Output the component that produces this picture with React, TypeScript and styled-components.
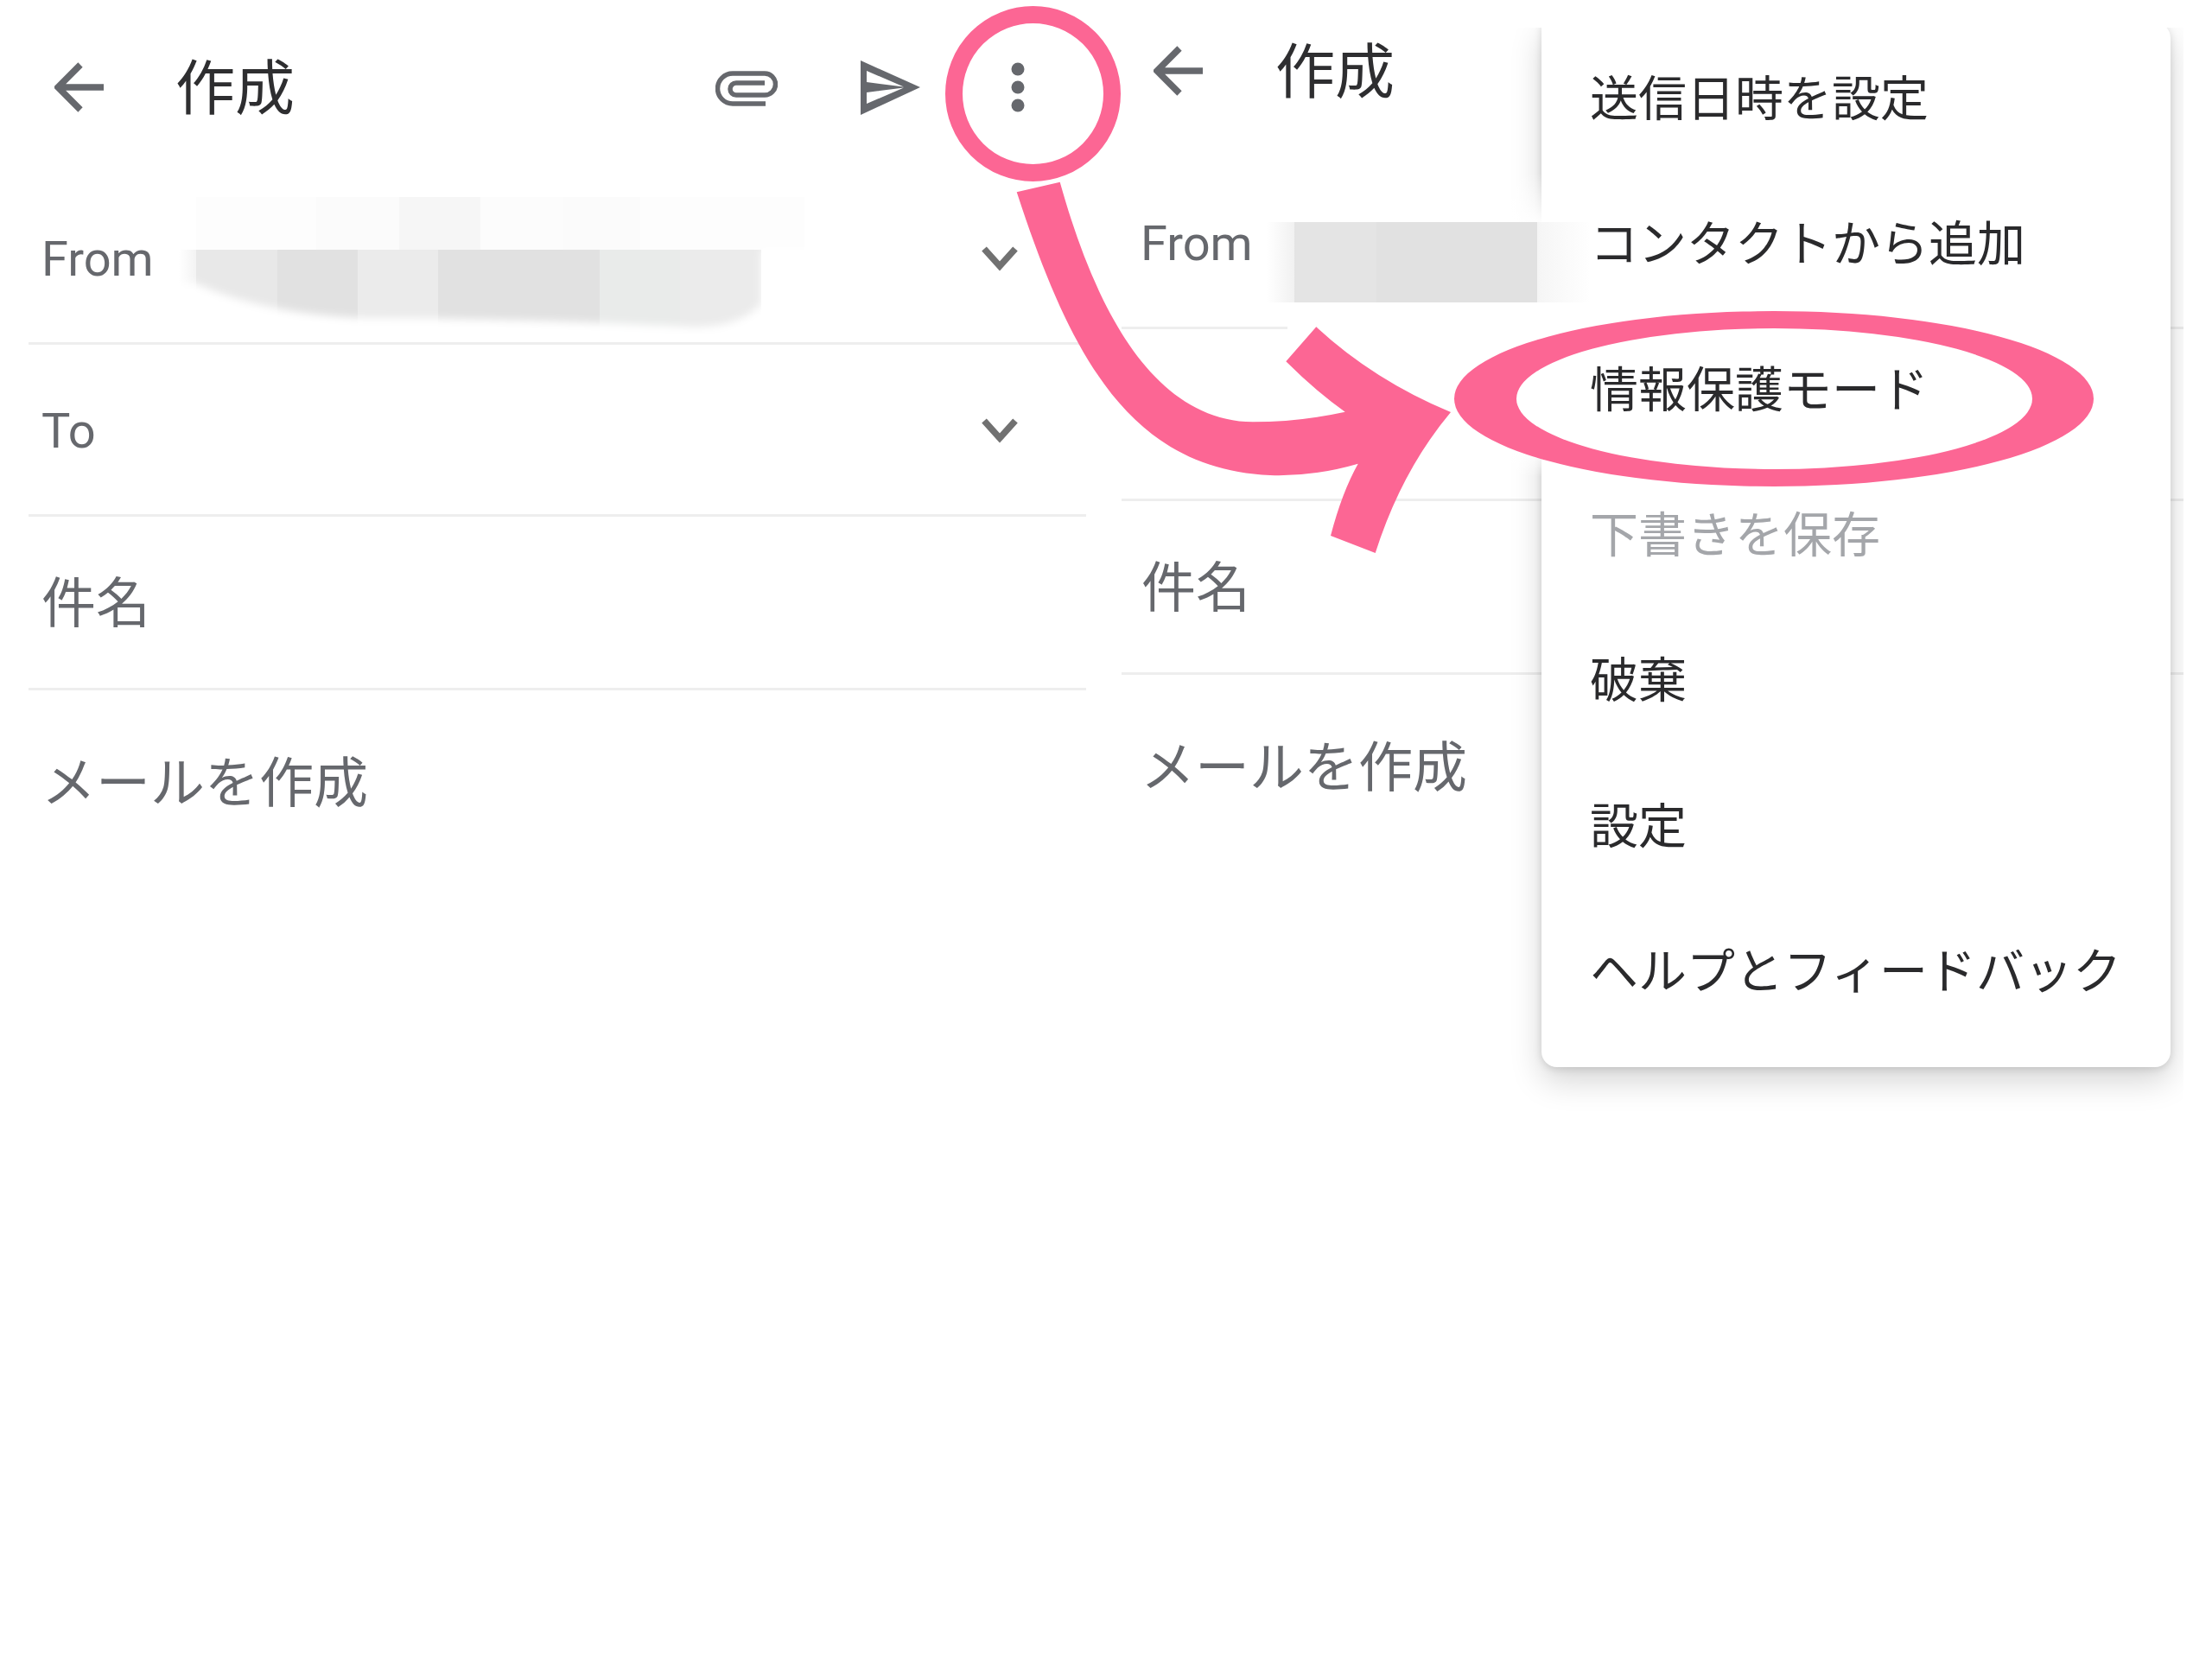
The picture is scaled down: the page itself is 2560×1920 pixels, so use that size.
import React from "react";
import styled, { createGlobalStyle } from "styled-components";

const Global = createGlobalStyle`
  html, body { margin: 0; padding: 0; background: #fff; }
  body { font-family: "Noto Sans CJK JP", "Roboto", sans-serif; }
`;

const Page = styled.div`
  position: relative;
  display: flex;
  align-items: flex-start;
  width: 2560px;
  height: 1920px;
  overflow: hidden;
  background: #fff;
`;

const Panel = styled.section<{ $width: number; $top: number; $pl: number; $pr: number }>`
  position: relative;
  flex: none;
  box-sizing: border-box;
  width: ${(p) => p.$width}px;
  height: ${(p) => 1920 - p.$top}px;
  margin-top: ${(p) => p.$top}px;
  padding: 0 ${(p) => p.$pr}px 0 ${(p) => p.$pl}px;
  overflow: hidden;
`;

const Header = styled.header<{ $h: number; $pt: number; $pb: number; $pl: number }>`
  display: flex;
  align-items: center;
  box-sizing: border-box;
  height: ${(p) => p.$h}px;
  padding: ${(p) => p.$pt}px 0 ${(p) => p.$pb}px ${(p) => p.$pl}px;
`;

const BackIcon = styled.svg<{ $gap: number }>`
  flex: none;
  width: 58px;
  height: 58px;
  margin-right: ${(p) => p.$gap}px;
`;

const Title = styled.h1`
  margin: 0 0 8px;
  font: 400 69px/1 "Noto Sans CJK JP", sans-serif;
  color: #2e2e30;
`;

const Tools = styled.div`
  display: flex;
  align-items: center;
  margin-left: auto;
`;

const ToolIcon = styled.svg<{ $w: number; $mr: number }>`
  flex: none;
  display: block;
  width: ${(p) => p.$w}px;
  height: 70px;
  margin-right: ${(p) => p.$mr}px;
`;

const Row = styled.div<{ $h: number; $pl: number }>`
  display: flex;
  align-items: center;
  box-sizing: border-box;
  height: ${(p) => p.$h}px;
  padding-left: ${(p) => p.$pl}px;
  border-bottom: 3px solid #eeeeee;
`;

const FieldLabel = styled.span`
  margin-top: 3px;
  font: 400 56px/1 "Roboto", sans-serif;
  color: #66686d;
`;

const Placeholder = styled.span`
  margin-bottom: 9px;
  font: 400 63px/1 "Noto Sans CJK JP", sans-serif;
  color: #66686d;
`;

const ComposeRow = styled.div<{ $h: number; $pl: number }>`
  display: flex;
  align-items: center;
  height: ${(p) => p.$h}px;
  padding: 0 0 7px ${(p) => p.$pl}px;
`;

const Mosaic = styled.svg<{ $w: number; $h: number; $ml: number }>`
  position: relative;
  z-index: 3;
  flex: none;
  display: block;
  width: ${(p) => p.$w}px;
  height: ${(p) => p.$h}px;
  margin-left: ${(p) => p.$ml}px;
`;

const Chevron = styled.svg`
  flex: none;
  width: 46px;
  height: 32px;
  margin: 2px 77px 0 auto;
`;

const Menu = styled.ul`
  position: absolute;
  z-index: 1;
  top: -6px;
  right: 15px;
  box-sizing: border-box;
  width: 728px;
  margin: 0;
  padding: 0 0 31px;
  list-style: none;
  background: #fff;
  border-radius: 0 18px 18px 18px;
  box-shadow: 0 16px 36px rgba(0, 0, 0, 0.17), 0 2px 10px rgba(0, 0, 0, 0.13);
`;

const MenuItem = styled.li<{ $disabled?: boolean }>`
  display: flex;
  align-items: center;
  height: 168.33px;
  padding-left: 56px;
  font: 400 56px/1 "Noto Sans CJK JP", sans-serif;
  white-space: nowrap;
  color: ${(p) => (p.$disabled ? "#a4a6aa" : "#2a2a2c")};
`;

const ShadowPatch = styled.div`
  position: absolute;
  z-index: 2;
  left: 192px;
  top: 168px;
  width: 294px;
  height: 352px;
  background: linear-gradient(
    to bottom,
    rgba(255, 255, 255, 0),
    #fff 60px,
    #fff 320px,
    rgba(255, 255, 255, 0)
  );
`;

const Annotations = styled.svg`
  position: absolute;
  z-index: 5;
  left: 0;
  top: 0;
  width: 2560px;
  height: 1920px;
  pointer-events: none;
`;

const Back = ({ gap }: { gap: number }) => (
  <BackIcon $gap={gap} viewBox="0 0 58 58" fill="none" stroke="#66686d" strokeWidth="7.5">
    <path d="M57 29H4M30 3 4 29l26 26" />
  </BackIcon>
);

const Down = () => (
  <Chevron viewBox="0 0 46 32" fill="none" stroke="#717171" strokeWidth="7.5">
    <path d="M5 5 23 25 41 5" />
  </Chevron>
);

const lowerCells = [
  [226, "#e8e8e8"],
  [320, "#e1e1e1"],
  [413, "#ebebeb"],
  [506, "#e1e1e1"],
  [600, "#e1e1e1"],
  [693, "#e9ebea"],
  [786, "#ebebeb"],
] as const;

const upperCells = [
  [226, 139, "#fdfdfd"],
  [365, 96, "#fbfbfb"],
  [461, 94, "#f6f6f6"],
  [555, 95, "#fcfcfc"],
  [650, 90, "#fbfbfb"],
  [740, 190, "#fdfdfd"],
] as const;

const LeftMosaic = () => (
  <Mosaic $w={740} $h={180} $ml={23} viewBox="200 208 740 180">
    <defs>
      <filter id="soft" x="-10%" y="-20%" width="120%" height="140%">
        <feGaussianBlur stdDeviation="5" />
      </filter>
      <mask id="smudge" maskUnits="userSpaceOnUse" x="200" y="208" width="740" height="180">
        <path
          fill="#fff"
          filter="url(#soft)"
          d="M190 200H960V289H880V352Q850 382 790 378Q600 368 415 368Q300 362 226 328H190Z"
        />
      </mask>
      <linearGradient id="fadeIn" x1="0" x2="1" y1="0" y2="0">
        <stop offset="0" stopColor="#fff" />
        <stop offset="1" stopColor="#f3f3f3" />
      </linearGradient>
    </defs>
    <g mask="url(#smudge)">
      {upperCells.map(([x, w, c]) => (
        <rect key={x} x={x} y={228} width={w} height={61} fill={c} />
      ))}
      {lowerCells.map(([x, c]) => (
        <rect key={x} x={x} y={289} width={94} height={100} fill={c} />
      ))}
      <rect x={206} y={289} width={20} height={60} fill="url(#fadeIn)" />
    </g>
  </Mosaic>
);

const RightMosaic = () => (
  <Mosaic $w={375} $h={190} $ml={16} viewBox="1465 185 375 190">
    <defs>
      <linearGradient id="fadeRight" x1="0" x2="1" y1="0" y2="0">
        <stop offset="0" stopColor="#fff" />
        <stop offset="1" stopColor="#f1f1f1" />
      </linearGradient>
      <linearGradient id="fadeOut" x1="0" x2="1" y1="0" y2="0">
        <stop offset="0" stopColor="#f5f5f5" />
        <stop offset="1" stopColor="#fff" />
      </linearGradient>
    </defs>
    <rect x={1465} y={257} width={32} height={93} fill="url(#fadeRight)" />
    <rect x={1497} y={257} width={95} height={93} fill="#e4e4e4" />
    <rect x={1592} y={257} width={186} height={93} fill="#e1e1e1" />
    <rect x={1778} y={257} width={62} height={93} fill="url(#fadeOut)" />
  </Mosaic>
);

const menuItems = [
  "送信日時を設定",
  "コンタクトから追加",
  "情報保護モード",
  "下書きを保存",
  "破棄",
  "設定",
  "ヘルプとフィードバック",
];

export default function App() {
  return (
    <Page>
      <Global />
      <Panel $width={1298} $top={0} $pl={33} $pr={41}>
        <Header $h={200} $pt={2} $pb={0} $pl={30}>
          <Back gap={82} />
          <Title>作成</Title>
          <Tools>
            <ToolIcon $w={72} $mr={96} viewBox="826 66 72 70" fill="none" stroke="#66686d" strokeWidth="5.5">
              <path d="M884 120H846a17.5 17.5 0 0 1 0-35h37a12.5 12.5 0 0 1 0 25h-33a7 7 0 0 1 0-14h33" />
            </ToolIcon>
            <ToolIcon $w={70} $mr={104} viewBox="996 66 70 70" fill="#66686d">
              <path
                fillRule="evenodd"
                d="M996 70 1065 101 996 133ZM1003 82V95L1046 100.5ZM1003 120 1046 101.5 1003 107Z"
              />
            </ToolIcon>
            <ToolIcon $w={16} $mr={71} viewBox="1170 66 16 70" fill="#66686d">
              <circle cx="1178" cy="80" r="7.5" />
              <circle cx="1178" cy="101" r="7.5" />
              <circle cx="1178" cy="122" r="7.5" />
            </ToolIcon>
          </Tools>
        </Header>
        <Row $h={199} $pl={15}>
          <FieldLabel>From</FieldLabel>
          <LeftMosaic />
          <Down />
        </Row>
        <Row $h={199} $pl={15}>
          <FieldLabel>To</FieldLabel>
          <Down />
        </Row>
        <Row $h={201} $pl={15}>
          <Placeholder>件名</Placeholder>
        </Row>
        <ComposeRow $h={212} $pl={15}>
          <Placeholder>メールを作成</Placeholder>
        </ComposeRow>
      </Panel>
      <Panel $width={1229} $top={32} $pl={0} $pr={0}>
        <Header $h={150} $pt={0} $pb={50} $pl={37}>
          <Back gap={83} />
          <Title>作成</Title>
        </Header>
        <Row $h={199} $pl={22}>
          <FieldLabel>From</FieldLabel>
          <RightMosaic />
        </Row>
        <Row $h={199} $pl={22} />
        <Row $h={201} $pl={23}>
          <Placeholder>件名</Placeholder>
        </Row>
        <ComposeRow $h={212} $pl={22}>
          <Placeholder>メールを作成</Placeholder>
        </ComposeRow>
        <ShadowPatch />
        <Menu>
          {menuItems.map((m, i) => (
            <MenuItem key={m} $disabled={i === 3}>
              {m}
            </MenuItem>
          ))}
        </Menu>
      </Panel>
      <Annotations viewBox="0 0 2560 1920">
        <circle cx="1195.5" cy="108.5" r="91.5" fill="none" stroke="#fc6694" strokeWidth="20" />
        <path
          fill="#fc6694"
          d="M1176.7 222.3 1226.7 210.7C1260 330 1323.3 486.7 1450 488.3Q1503.3 488.3 1556.7 476.7Q1523 453 1488.3 418.3L1523.3 378.3Q1590 440 1679 477Q1622 545 1591.7 640L1540 620Q1553 570 1571.7 536.7Q1520 551.7 1470 550C1310 543 1240 416.7 1176.7 222.3Z"
        />
        <path
          fill="#fc6694"
          fillRule="evenodd"
          d="M1683 461.5a370 101.5 0 1 0 740 0a370 101.5 0 1 0-740 0ZM1755 461.5a298.5 81.5 0 1 0 597 0a298.5 81.5 0 1 0-597 0Z"
        />
      </Annotations>
    </Page>
  );
}
